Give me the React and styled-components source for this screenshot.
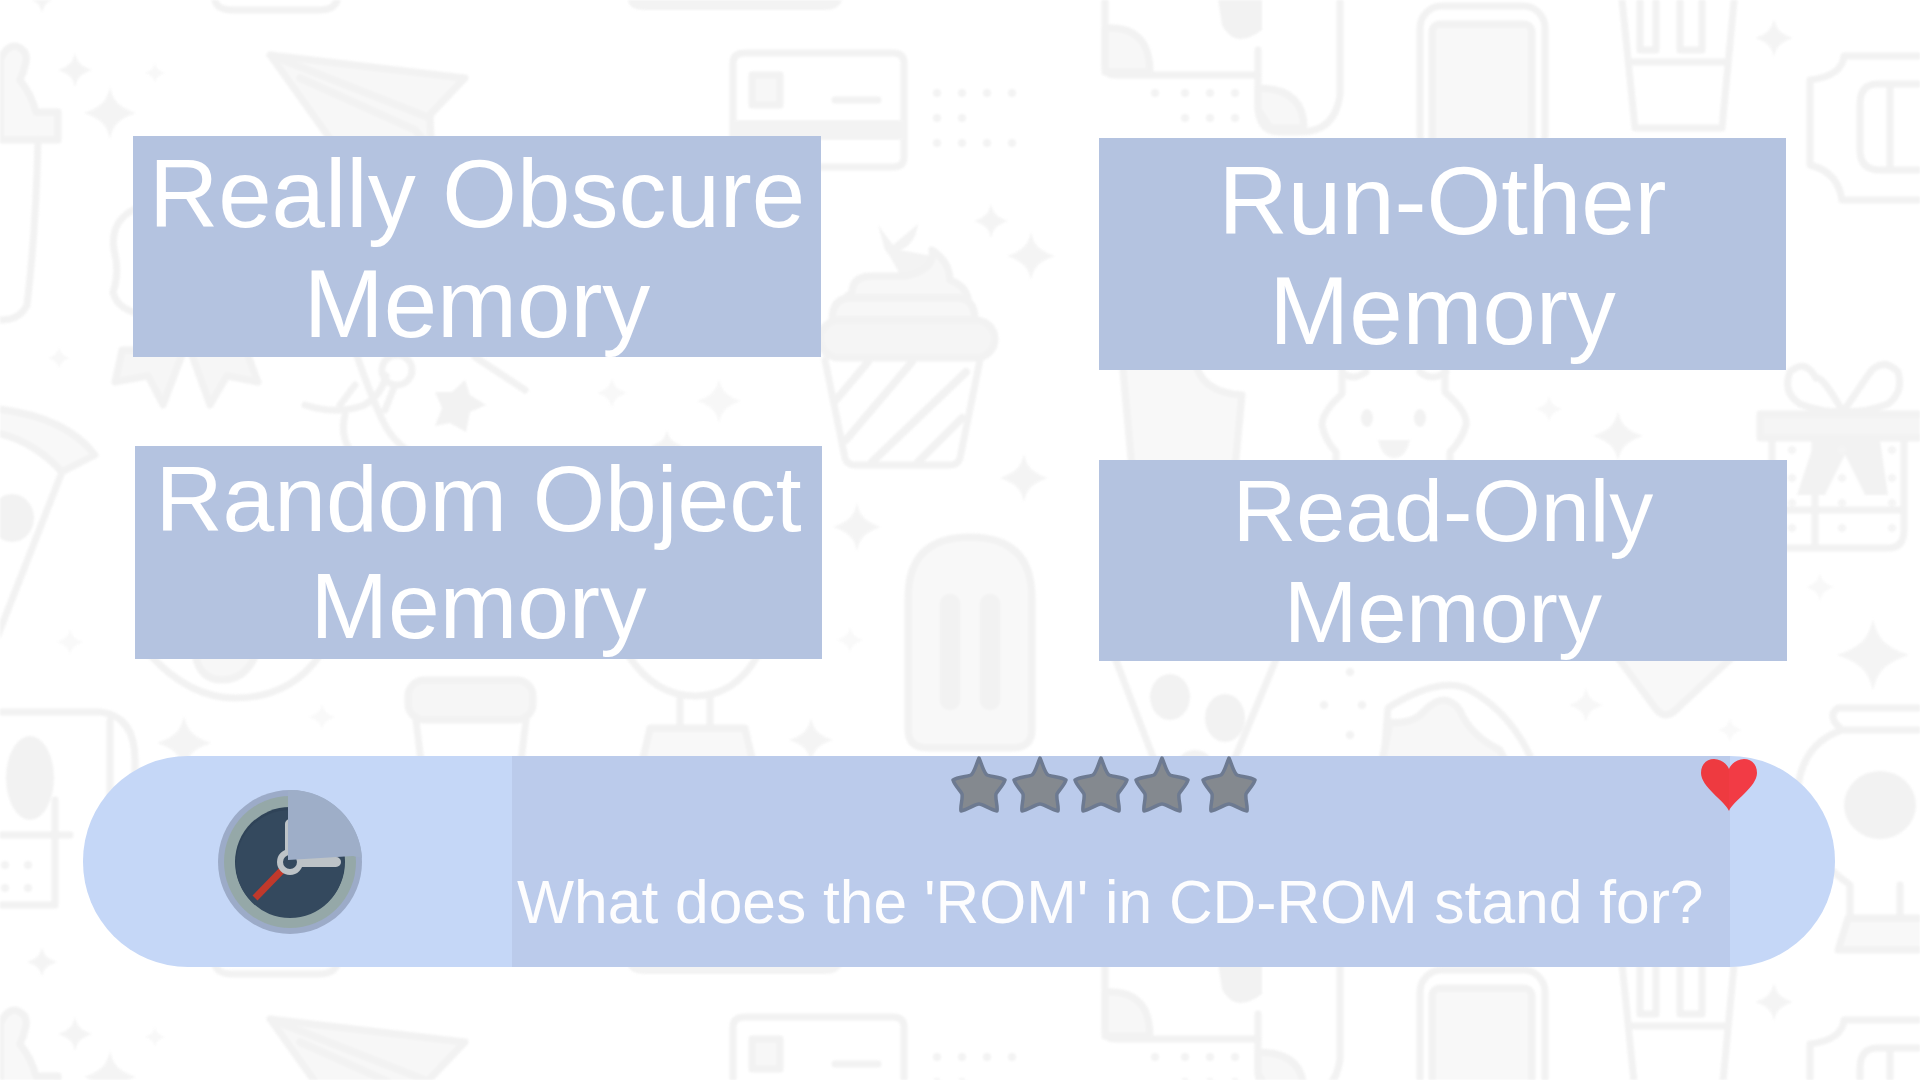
import React from "react";
import styled, { createGlobalStyle } from "styled-components";

const GlobalStyle = createGlobalStyle`
  html, body {
    margin: 0;
    padding: 0;
    background: #ffffff;
  }
`;

const Page = styled.div`
  position: relative;
  width: 1920px;
  height: 1080px;
  overflow: hidden;
  font-family: "Liberation Sans", Arial, sans-serif;
  color: #ffffff;
  box-sizing: border-box;
  padding-top: 136px;
`;

const Backdrop = styled.svg`
  position: absolute;
  left: 0;
  top: 0;
  width: 1920px;
  height: 1080px;
  filter: blur(1.1px);
  opacity: 0.85;
`;

const Board = styled.div`
  position: relative;
  display: flex;
  align-items: flex-start;
  height: 620px;
  padding-left: 133px;
`;

const Column = styled.div`
  display: flex;
  flex-direction: column;
  margin-left: ${(p) => p.$left}px;
  margin-top: ${(p) => p.$top}px;
  gap: ${(p) => p.$gap}px;
`;

const AnswerCard = styled.div`
  width: ${(p) => p.$width}px;
  height: ${(p) => p.$height}px;
  margin-left: ${(p) => p.$shift || 0}px;
  padding-top: ${(p) => p.$pad || 0}px;
  box-sizing: border-box;
  background: #b4c3e0;
  font-size: ${(p) => p.$size}px;
  line-height: 1.149;
  text-align: center;
  overflow: hidden;
`;

const QuestionBar = styled.div`
  position: relative;
  display: flex;
  width: 1752px;
  height: 211px;
  margin-left: 83px;
  border-radius: 105px;
  background: #c5d7f7;
`;

const TimerSlot = styled.div`
  display: flex;
  align-items: center;
  width: 429px;
  padding-left: 135px;
  box-sizing: border-box;
`;

const QuestionPanel = styled.div`
  width: 1218px;
  background: #bbcbeb;
`;

const Stars = styled.div`
  display: flex;
  height: 112px;
  padding-left: 438px;
`;

const StarIcon = styled.svg`
  width: 58px;
  height: 58px;
  margin-right: 3px;
  margin-left: ${(p) => p.$nudge || 0}px;
`;

const QuestionText = styled.div`
  padding-left: 5px;
  font-size: 60.5px;
  line-height: 69px;
  white-space: nowrap;
  color: #fdfdfe;
`;

const Heart = styled.svg`
  position: absolute;
  left: 1618px;
  top: 3px;
  width: 56px;
  height: 52px;
`;

const Sparkle = ({ x, y, r, fill = "#f3f3f3" }) => (
  <path
    transform={`translate(${x} ${y}) scale(${r})`}
    fill={fill}
    stroke="none"
    d="M0 -1C.13 -.48 .3 -.25 1 0C.3 .25 .13 .48 0 1C-.13 .48 -.3 .25 -1 0C-.3 -.25 -.13 -.48 0 -1Z"
  />
);

const Doodles = () => (
  <g fill="none" stroke="#f0f0f0" strokeWidth="7" strokeLinejoin="round" strokeLinecap="round">
    {/* tube, far left */}
    <path fill="#f7f7f7" d="M0 60Q6 45 16 46Q28 50 26 62Q24 72 20 80Q32 95 36 112H58V140H0Z" />
    <path d="M38 140Q36 230 27 305Q20 320 0 320" />
    <Sparkle x={75} y={70} r={17} />
    <Sparkle x={110} y={113} r={26} />
    <Sparkle x={155} y={73} r={10} fill="#f7f7f7" />

    {/* paper plane */}
    <path fill="#f6f6f6" d="M270 55L465 78L430 115L432 160H345Z" />
    <path d="M270 55L430 118M300 78L415 130L432 150" />

    {/* card */}
    <path d="M733 63Q733 53 745 53H893Q904 53 904 63V157Q904 167 893 167H745Q733 167 733 157Z" />
    <path stroke="none" fill="#f2f2f2" d="M733 120H904V140H733Z" />
    <path fill="#f6f6f6" d="M752 75H780V105H752Z" />
    <path d="M835 100H878" />
    <g stroke="none" fill="#f1f1f1">
      {[937, 962, 987, 1012, 1155, 1185, 1210, 1235].map((x) => (
        <circle key={x} cx={x} cy="93" r="4" />
      ))}
      {[937, 962, 1185, 1210, 1235].map((x) => (
        <circle key={x} cx={x} cy="118" r="4" />
      ))}
      {[937, 962, 987, 1012].map((x) => (
        <circle key={x} cx={x} cy="143" r="4" />
      ))}
    </g>

    {/* scroll */}
    <path d="M1105 -20V65Q1105 75 1115 75H1258" />
    <path fill="#f6f6f6" d="M1105 28Q1150 25 1150 72H1105Z" />
    <path d="M1340 -20V95Q1335 132 1300 132H1280Q1258 132 1258 105V50" />
    <path fill="#f6f6f6" d="M1258 88Q1304 88 1304 128H1270L1258 110Z" />
    <path fill="#f0f0f0" stroke="none" d="M1215 -20H1262V30Q1235 50 1222 25Z" />

    {/* phone */}
    <rect x="1420" y="6" width="125" height="150" rx="22" />
    <rect x="1432" y="24" width="100" height="130" rx="8" fill="#f7f7f7" />

    {/* fries cup */}
    <path d="M1620 -20L1635 128H1722L1736 -20" />
    <path d="M1630 62H1728M1640 -20V50H1656V-20M1680 -20V50H1702V-20" />
    <Sparkle x={1774} y={38} r={19} />

    {/* ticket */}
    <path d="M1930 56H1844Q1842 76 1810 80V165Q1838 172 1842 200H1930" />
    <path d="M1930 84H1878Q1860 84 1860 104V150Q1860 170 1880 170H1930M1890 84V170" />

    {/* cupcake */}
    <path fill="#f1f1f1" stroke="none" d="M878 225L893 245L918 224Q915 245 900 250L932 256L940 275H900Q890 255 885 250Z" />
    <path fill="#f6f6f6" d="M852 292Q852 276 872 276H905Q935 270 932 250Q950 262 950 280Q965 285 968 298H845Z" />
    <path fill="#f6f6f6" d="M832 320Q832 298 850 298H960Q975 300 975 320Z" />
    <rect x="820" y="320" width="175" height="38" rx="19" fill="#f4f4f4" />
    <path d="M825 360L845 458Q847 465 855 465H950Q958 465 960 458L980 360" />
    <path d="M836 400L868 362M846 440L912 362M872 462L966 372M918 462L962 418" strokeWidth="8" />
    <Sparkle x={991} y={221} r={17} />
    <Sparkle x={1031} y={256} r={24} />
    <Sparkle x={1024} y={478} r={24} />
    <Sparkle x={857} y={527} r={24} />
    <Sparkle x={850} y={640} r={13} fill="#f8f8f8" />

    {/* popsicle */}
    <path fill="#f7f7f7" d="M908 598Q908 537 970 537Q1032 537 1032 598V730Q1032 748 1012 748H928Q908 748 908 730Z" />
    <path stroke="#f0f0f0" strokeWidth="20" d="M950 604V700M990 604V700" />

    {/* pizza, far left */}
    <path fill="#f7f7f7" d="M-10 408Q65 415 95 455L62 472Q30 438 -10 432Z" />
    <path d="M62 472L-4 640" />
    <ellipse cx="12" cy="518" rx="22" ry="24" fill="#f0f0f0" stroke="none" />
    <Sparkle x={59} y={358} r={11} fill="#f7f7f7" />
    <Sparkle x={70} y={642} r={13} fill="#f8f8f8" />

    {/* badge */}
    <path d="M133 210Q110 222 114 250Q120 272 113 292Q116 306 133 312" />
    <path fill="#f5f5f5" d="M122 350L115 382L148 376L163 405L184 350Z" />
    <path fill="#f5f5f5" d="M190 350L210 405L227 376L258 382L246 350Z" />

    {/* ribbon knot */}
    <path d="M305 405Q335 415 362 406Q380 398 386 376" />
    <circle cx="397" cy="370" r="15" />
    <path d="M355 350Q372 400 385 425Q395 445 425 462M345 415Q340 435 350 450M385 410L395 385M475 357L525 390M340 405L355 385" />
    <path
      fill="#f0f0f0"
      stroke="none"
      d="M465 380L470 395L486 405L470 412L466 432L450 423L435 426L442 408L435 392L452 392Z"
    />
    <Sparkle x={612} y={393} r={15} fill="#f7f7f7" />
    <Sparkle x={719} y={401} r={22} fill="#f6f6f6" />
    <Sparkle x={667} y={446} r={16} />

    {/* soda cup */}
    <path fill="#f7f7f7" d="M1122 360L1132 470H1235L1242 395Q1200 392 1195 360Z" />
    <Sparkle x={1618} y={436} r={25} />
    <Sparkle x={1549} y={409} r={13} fill="#f7f7f7" />

    {/* cookie */}
    <path d="M1342 360V394Q1322 412 1322 425Q1325 440 1336 452V470M1445 360V392Q1468 412 1466 425Q1462 440 1450 452V470" />
    <path d="M1342 372Q1352 382 1366 372M1420 372Q1432 382 1446 372" />
    <ellipse cx="1367" cy="418" rx="6" ry="9" fill="#f0f0f0" stroke="none" />
    <ellipse cx="1420" cy="418" rx="6" ry="9" fill="#f0f0f0" stroke="none" />
    <path fill="#f2f2f2" stroke="none" d="M1378 440H1410Q1406 458 1394 458Q1382 458 1378 440Z" />

    {/* gift */}
    <path d="M1843 412Q1822 375 1816 378Q1805 358 1790 372Q1782 392 1800 404Q1820 412 1843 412Q1868 375 1872 370Q1885 358 1898 372Q1904 392 1888 404Q1868 412 1843 412" />
    <rect x="1760" y="414" width="175" height="24" fill="#f4f4f4" />
    <path d="M1772 438V535Q1772 548 1785 548H1888Q1904 548 1904 530V438M1772 510H1904M1815 438V548" />
    <path fill="#f0f0f0" stroke="none" d="M1815 440H1880L1888 495H1865L1845 455L1825 495H1797Z" />
    <g stroke="none" fill="#f3f3f3">
      {[1792, 1842, 1892].map((x) => [450, 478, 503, 528].map((y) => <circle key={x + "-" + y} cx={x} cy={y} r="4" />))}
    </g>
    <Sparkle x={1820} y={587} r={14} fill="#f7f7f7" />
    <Sparkle x={1873} y={655} r={36} />

    {/* pot and cups under the cards */}
    <path d="M150 655Q190 698 235 698Q290 698 320 655" />
    <path fill="#f6f6f6" d="M195 655Q200 680 222 680Q245 680 256 655Z" />
    <rect x="408" y="680" width="125" height="40" rx="16" fill="#f5f5f5" />
    <path d="M416 720L422 770M526 720L520 770" />
    <path d="M628 655Q655 696 695 696Q735 696 758 655M680 696V728M710 696V728" />
    <path fill="#f7f7f7" d="M640 770L650 728H745L755 770Z" />
    <Sparkle x={184} y={743} r={27} />
    <Sparkle x={322} y={717} r={13} fill="#f8f8f8" />
    <Sparkle x={811} y={740} r={22} />

    {/* pizza slice */}
    <path d="M1112 650L1158 770M1280 650L1230 770" />
    <g stroke="none" fill="#f0f0f0">
      <ellipse cx="1170" cy="697" rx="20" ry="23" />
      <ellipse cx="1225" cy="718" rx="20" ry="24" />
      <ellipse cx="1195" cy="762" rx="16" ry="12" />
      <circle cx="1350" cy="672" r="4" />
      <circle cx="1324" cy="705" r="4" />
      <circle cx="1362" cy="705" r="4" />
      <circle cx="1350" cy="735" r="4" />
    </g>
    <Sparkle x={1586} y={705} r={17} fill="#f6f6f6" />
    <Sparkle x={1730} y={730} r={12} fill="#f8f8f8" />

    {/* planet */}
    <path d="M1383 770L1388 708Q1440 675 1470 690Q1515 715 1536 770" />
    <path fill="#f6f6f6" d="M1390 722Q1412 725 1425 710Q1445 690 1460 710Q1470 735 1500 750L1510 770H1380Z" />

    {/* triangle */}
    <path fill="#f7f7f7" d="M1612 650L1655 708Q1665 722 1678 708L1740 650Z" />

    {/* mug */}
    <path d="M1930 708H1838Q1826 716 1842 730H1930M1842 730Q1798 745 1797 800Q1800 850 1850 885V915M1900 885V915" />
    <ellipse cx="1880" cy="805" rx="36" ry="34" fill="#f0f0f0" stroke="none" />
    <path fill="#f7f7f7" d="M1848 918H1930V950H1838Z" />

    {/* scroll, left */}
    <path d="M0 712H100Q135 716 135 760V790Q120 835 95 835" />
    <ellipse cx="30" cy="778" rx="24" ry="42" fill="#f0f0f0" stroke="none" />
    <path d="M55 800V905H0M0 835H70M110 720V825" />
    <g stroke="none" fill="#f1f1f1">
      <circle cx="5" cy="865" r="4" />
      <circle cx="28" cy="865" r="4" />
      <circle cx="5" cy="888" r="4" />
      <circle cx="28" cy="888" r="4" />
    </g>
    <Sparkle x={42} y={962} r={15} />

    {/* lower edge of the tile, shows at the very top */}
    <path d="M215 930V965Q218 974 232 974H320Q335 974 338 962V930" />
    <path fill="#f1f1f1" stroke="none" d="M628 930H842V965Q838 974 825 974H645Q630 974 628 965Z" />
  </g>
);

const ClockIcon = () => (
  <svg width="144" height="144" viewBox="0 0 144 144">
    <circle cx="72" cy="72" r="72" fill="#9cabc8" />
    <circle cx="72" cy="72" r="66" fill="#95a8a8" />
    <circle cx="72" cy="72" r="55" fill="#2f4358" />
    <circle cx="72" cy="74" r="54" fill="#34495e" />
    <path d="M70 74L37 108" stroke="#c0392b" strokeWidth="7" />
    <path d="M72 72V34M72 72H118" stroke="#bdc3c7" strokeWidth="10" strokeLinecap="round" />
    <circle cx="72" cy="72" r="10" fill="#34495e" stroke="#bdc3c7" strokeWidth="6" />
    <path d="M70 0H72A72 72 0 0 1 144 68L135 66L70 70Z" fill="#9eaec8" />
  </svg>
);

const Star = ({ nudge }) => (
  <StarIcon $nudge={nudge} viewBox="0 0 58 58">
    <path
      d="M29 2C32 9 34 17 37 19C42 21 50 21 55 24C53 30 48 34 46 38C45 43 48 50 47 55C41 54 33 48 29 48C25 48 17 54 11 55C10 50 13 43 12 38C10 34 5 30 3 24C8 21 16 21 21 19C24 17 26 9 29 2Z"
      fill="#84898f"
      stroke="#6d7a91"
      strokeWidth="3.5"
      strokeLinejoin="round"
    />
  </StarIcon>
);

const answers = [
  { id: "a", text: ["Really Obscure", "Memory"], width: 688, height: 221, size: 96, pad: 3 },
  { id: "b", text: ["Random Object", "Memory"], width: 687, height: 213, size: 93, shift: 2 },
];

const answersRight = [
  { id: "c", text: ["Run-Other", "Memory"], width: 687, height: 232, size: 96, pad: 8 },
  { id: "d", text: ["Read-Only", "Memory"], width: 688, height: 201, size: 88 },
];

const Answer = ({ item }) => (
  <AnswerCard
    $width={item.width}
    $height={item.height}
    $size={item.size}
    $pad={item.pad}
    $shift={item.shift}
  >
    {item.text[0]}
    <br />
    {item.text[1]}
  </AnswerCard>
);

export default function App() {
  return (
    <>
      <GlobalStyle />
      <Page>
        <Backdrop viewBox="0 0 1920 1080">
          <defs>
            <g id="tile">
              <Doodles />
            </g>
          </defs>
          <use href="#tile" />
          <use href="#tile" y="964" />
          <use href="#tile" y="-964" />
        </Backdrop>

        <Board>
          <Column $left={0} $top={0} $gap={89}>
            {answers.map((item) => (
              <Answer key={item.id} item={item} />
            ))}
          </Column>
          <Column $left={277} $top={2} $gap={90}>
            {answersRight.map((item) => (
              <Answer key={item.id} item={item} />
            ))}
          </Column>
        </Board>

        <QuestionBar>
          <TimerSlot>
            <ClockIcon />
          </TimerSlot>
          <QuestionPanel>
            <Stars>
              <Star />
              <Star />
              <Star />
              <Star />
              <Star nudge={6} />
            </Stars>
            <QuestionText>What does the 'ROM' in CD-ROM stand for?</QuestionText>
          </QuestionPanel>
          <Heart viewBox="0 0 56 52">
            <path d="M28 52C24 42 0 28 0 14C0 5 6 0 13 0C20 0 26 5 28 10Z" fill="#ee3a40" />
            <path d="M28 52C32 42 56 28 56 14C56 5 50 0 43 0C36 0 30 5 28 10Z" fill="#f23b45" />
          </Heart>
        </QuestionBar>
      </Page>
    </>
  );
}
